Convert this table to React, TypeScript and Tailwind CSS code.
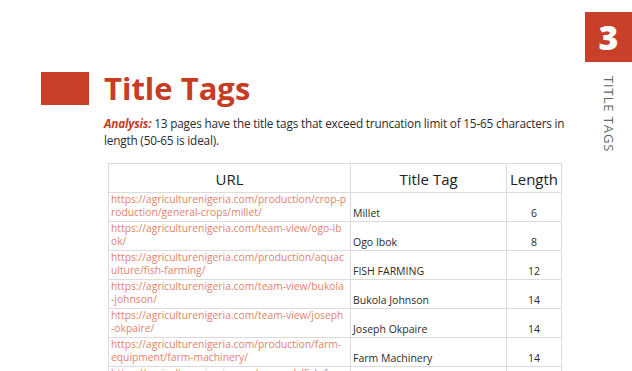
// URL lines are split where the report wraps them
const rows = [
  {
    url: ["https://agriculturenigeria.com/production/crop-p", "roduction/general-crops/millet/"],
    title: "Millet",
    len: 6,
  },
  {
    url: ["https://agriculturenigeria.com/team-view/ogo-ib", "ok/"],
    title: "Ogo Ibok",
    len: 8,
  },
  {
    url: ["https://agriculturenigeria.com/production/aquac", "ulture/fish-farming/"],
    title: "FISH FARMING",
    len: 12,
  },
  {
    url: ["https://agriculturenigeria.com/team-view/bukola", "-johnson/"],
    title: "Bukola Johnson",
    len: 14,
  },
  {
    url: ["https://agriculturenigeria.com/team-view/joseph", "-okpaire/"],
    title: "Joseph Okpaire",
    len: 14,
  },
  {
    url: ["https://agriculturenigeria.com/production/farm-", "equipment/farm-machinery/"],
    title: "Farm Machinery",
    len: 14,
  },
  {
    url: ["https://agriculturenigeria.com/research/fish-fe", "ed-production/"],
    title: "Fish Feed",
    len: 9,
  },
];

export default function App() {
  return (
    <div
      className="flex w-[632px] h-[371px] overflow-hidden bg-white text-[#333]"
      style={{ fontFamily: '"Open Sans", "Liberation Sans", sans-serif' }}
    >
      <div className="flex-1 pt-[68px]">
        <div className="flex items-center">
          <div className="ml-[41px] w-[48px] h-[33px] bg-[#c9402a]" />
          <h1 className="ml-[15px] text-[31px] leading-[40px] font-bold text-[#c63d24]">
            Title Tags
          </h1>
        </div>
        <p className="mt-[7px] ml-[104px] mr-[8px] text-[11.8px] leading-[17px] tracking-[-0.2px] text-[#2b2b2b]">
          <span className="font-bold italic text-[#c63d24]">Analysis:</span> 13 pages have the
          title tags that exceed truncation limit of 15-65 characters in length (50-65 is ideal).
        </p>
        <table className="mt-[14px] ml-[108px] border-collapse table-fixed w-[453px]">
          <colgroup>
            <col className="w-[242px]" />
            <col className="w-[156px]" />
            <col className="w-[55px]" />
          </colgroup>
          <thead>
            <tr className="h-[29px]">
              <th className="border border-[#dcdcdc] font-normal text-[15px] text-[#222] pt-[3px]">URL</th>
              <th className="border border-[#dcdcdc] font-normal text-[15px] text-[#222] pt-[3px]">Title Tag</th>
              <th className="border border-[#dcdcdc] font-normal text-[15px] text-[#222] pt-[3px]">Length</th>
            </tr>
          </thead>
          <tbody>
            {rows.map((r, i) => (
              <tr key={i} className="h-[29px]">
                <td className="border border-[#dcdcdc] px-[2px] align-top text-[10.3px] leading-[13px] text-[#e2826c]">
                  {r.url.map((line, j) => (
                    <span key={j} className="block whitespace-nowrap overflow-hidden">
                      {line}
                    </span>
                  ))}
                </td>
                <td className="border border-[#dcdcdc] px-[2px] align-bottom pb-[1px] text-[10.5px] leading-[13px] text-[#2b2b2b]">
                  {r.title}
                </td>
                <td className="border border-[#dcdcdc] align-bottom pb-[1px] text-center text-[10.5px] leading-[13px] text-[#2b2b2b]">
                  {r.len}
                </td>
              </tr>
            ))}
          </tbody>
        </table>
      </div>
      <div className="w-[47px] pt-[12px] flex flex-col items-center">
        <div className="w-[47px] h-[50px] bg-[#c9402a] flex items-center justify-center text-white text-[34px] font-extrabold leading-none">
          3
        </div>
        <div className="mt-[14px] [writing-mode:vertical-rl] text-[13px] tracking-[0.9px] text-[#666]">
          TITLE TAGS
        </div>
      </div>
    </div>
  );
}
